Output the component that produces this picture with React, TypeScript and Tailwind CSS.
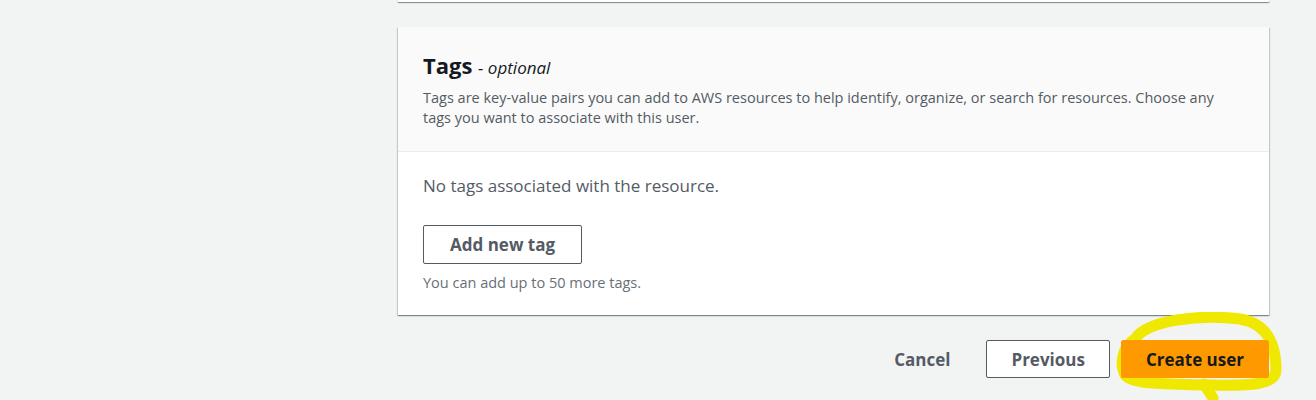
import { ReactNode } from 'react';

const cardShadow =
  'shadow-[0_1px_1px_0_rgba(0,28,36,0.3),1px_1px_1px_0_rgba(0,28,36,0.15),-1px_1px_1px_0_rgba(0,28,36,0.15)]';

function FooterButton({ children, variant }: { children: ReactNode; variant: 'link' | 'normal' | 'primary' }) {
  const styles = {
    link: 'border-transparent text-[#545b64]',
    normal: 'border-[#545b64] bg-white text-[#545b64]',
    primary: 'border-[#ff9900] bg-[#ff9900] text-[#16191f]',
  }[variant];
  return (
    <button className={`relative z-10 h-[38px] rounded-[2px] border px-[24px] text-[17px] font-bold leading-none ${styles}`}>
      {children}
    </button>
  );
}

function Highlight() {
  // yellow marker scribble drawn round the primary button
  return (
    <svg
      className="pointer-events-none absolute left-[-10px] top-[-28px]"
      width="180"
      height="90"
      viewBox="0 0 180 90"
      fill="none"
    >
      <path
        d="M24 27 C36 8, 89 2, 129 7 C157 12, 165 33, 165 58 C165 73, 139 74, 99 73 C59 72, 22 73, 14 63 C9 53, 10 36, 24 27 Z"
        stroke="#efe800"
        strokeWidth="11"
        strokeLinecap="round"
        strokeLinejoin="round"
      />
      <path d="M93 72 L102 86" stroke="#efe800" strokeWidth="11" strokeLinecap="round" />
    </svg>
  );
}

export default function App() {
  return (
    <div className="flex h-[400px] w-full overflow-hidden bg-[#f2f3f3] font-['Open_Sans',sans-serif]">
      <div className="w-[398px] shrink-0" />
      <div className="w-[871px] shrink-0">
        <div className={`h-[2px] bg-white ${cardShadow}`} />

        <div className={`mt-[25px] bg-white ${cardShadow}`}>
          <div className="border-b border-[#eaeded] bg-[#fafafa] pl-[25px] pr-6 pb-[23px] pt-6">
            <h2 className="text-[22px] font-bold leading-[28px] text-[#16191f]">
              Tags <span className="text-[17px] font-normal italic text-[#16191f]">- optional</span>
            </h2>
            <p className="mt-[6px] max-w-[800px] text-[14.5px] leading-[20px] text-[#545b64]">
              Tags are key-value pairs you can add to AWS resources to help identify, organize, or search for
              resources. Choose any tags you want to associate with this user.
            </p>
          </div>
          <div className="pl-[25px] pr-6 pb-[22px] pt-[22px]">
            <p className="text-[17px] leading-[24px] text-[#545b64]">No tags associated with the resource.</p>
            <button className="mt-[27px] block h-[39px] rounded-[2px] border border-[#545b64] bg-white px-[26px] text-[17px] font-bold leading-none text-[#545b64]">
              Add new tag
            </button>
            <p className="mt-[9px] text-[14.5px] leading-[20px] text-[#687078]">You can add up to 50 more tags.</p>
          </div>
        </div>

        <div className="mt-[25px] flex items-center justify-end gap-[11px]">
          <FooterButton variant="link">Cancel</FooterButton>
          <FooterButton variant="normal">Previous</FooterButton>
          <div className="relative">
            <Highlight />
            <FooterButton variant="primary">Create user</FooterButton>
          </div>
        </div>
      </div>
    </div>
  );
}
